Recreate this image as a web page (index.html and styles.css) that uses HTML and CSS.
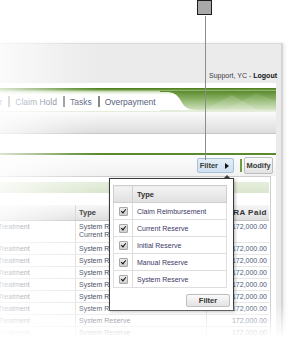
FILE: index.html
```html
<!doctype html>

<html lang="en">

<head>
  <meta charset="utf-8">
  <title>Claim Reserve Filter</title>
  <link rel="stylesheet" href="styles.css">
</head>

<body>
  <!-- callout pointing at the Filter button -->
  <div class="marker"></div>
  <div class="marker-line"></div>

  <div class="screen">
    <div class="userbar">Support, YC - <b>Logout</b></div>

    <div class="page">
      <div class="nav">
        <div class="nav-links">
          <span class="nav-item">Transfer</span>
          <span class="nav-sep"></span>
          <span class="nav-item">Claim Hold</span>
          <span class="nav-sep"></span>
          <span class="nav-item">Tasks</span>
          <span class="nav-sep"></span>
          <span class="nav-item">Overpayment</span>
        </div>
        <svg class="nav-swoosh" viewBox="0 0 116 23" preserveAspectRatio="none">
          <defs>
            <linearGradient id="swoosh" x1="0" y1="0" x2="0" y2="1">
              <stop offset="0" stop-color="#5a8a2c" />
              <stop offset="0.45" stop-color="#8db46a" />
              <stop offset="1" stop-color="#d2e2c0" />
            </linearGradient>
          </defs>
          <path d="M0 3 H116 V22 H36 C28 22 24 19 21 13 C17 6 13 4 6 4 H0 Z" fill="url(#swoosh)" />
          <path d="M44 22 L72 7 L98 22 Z" fill="#fff" opacity=".14" />
          <path d="M66 22 L96 5 L116 13 V22 Z" fill="#fff" opacity=".1" />
          <rect x="0" y="22" width="116" height="1" fill="#e4edd9" />
        </svg>
      </div>
      <div class="band"></div>
      <div class="gap"></div>

      <div class="toolbar">
        <button class="btn btn-filter">Filter <span class="btn-arrow"></span></button>
        <span class="tool-sep"></span>
        <button class="btn btn-modify">Modify</button>
      </div>

      <div class="grid">
        <div class="grid-title"></div>
        <table class="grid-table">
          <colgroup>
            <col class="col-treat">
            <col class="col-type">
            <col class="col-paid">
          </colgroup>
          <thead>
            <tr>
              <th></th>
              <th>Type</th>
              <th class="num paid-head">RA Paid</th>
            </tr>
          </thead>
          <tbody>
            <tr class="row-double">
              <td>Treatment</td>
              <td>System Reserve<br>Current Reserve</td>
              <td class="num">172,000.00</td>
            </tr>
            <tr><td>Treatment</td><td>System Reserve</td><td class="num">172,000.00</td></tr>
            <tr><td>Treatment</td><td>System Reserve</td><td class="num">172,000.00</td></tr>
            <tr><td>Treatment</td><td>System Reserve</td><td class="num">172,000.00</td></tr>
            <tr><td>Treatment</td><td>System Reserve</td><td class="num">172,000.00</td></tr>
            <tr><td>Treatment</td><td>System Reserve</td><td class="num">172,000.00</td></tr>
            <tr><td>Treatment</td><td>System Reserve</td><td class="num">172,000.00</td></tr>
            <tr><td>Treatment</td><td>System Reserve</td><td class="num">172,000.00</td></tr>
            <tr><td>Treatment</td><td>System Reserve</td><td class="num">172,000.00</td></tr>
          </tbody>
        </table>
      </div>
    </div>
  </div>

  <!-- filter dropdown -->
  <div class="popup">
    <table class="popup-table">
      <thead>
        <tr><th class="check-col"></th><th>Type</th></tr>
      </thead>
      <tbody>
        <tr><td class="check-col"><span class="check"></span></td><td>Claim Reimbursement</td></tr>
        <tr><td class="check-col"><span class="check"></span></td><td>Current Reserve</td></tr>
        <tr><td class="check-col"><span class="check"></span></td><td>Initial Reserve</td></tr>
        <tr><td class="check-col"><span class="check"></span></td><td>Manual Reserve</td></tr>
        <tr><td class="check-col"><span class="check"></span></td><td>System Reserve</td></tr>
      </tbody>
    </table>
    <div class="popup-foot">
      <button class="btn btn-apply">Filter</button>
    </div>
  </div>

  <div class="fade"></div>
</body>

</html>
```

FILE: styles.css
```css
body {
  margin: 0;
  padding: 0;
  width: 288px;
  height: 338px;
  overflow: hidden;
  position: relative;
  background: #fff;
  font-family: "Liberation Sans", Arial, sans-serif;
  color: #444;
}

.marker {
  position: absolute;
  top: 0;
  left: 197px;
  width: 13px;
  height: 13px;
  background: #a9a9a9;
  border: 1.5px solid #1c1c1c;
  z-index: 5;
}

.marker-line {
  position: absolute;
  top: 16px;
  left: 205px;
  width: 1px;
  height: 144px;
  background: #8c8c8c;
  z-index: 5;
}

.screen {
  margin-top: 43px;
  width: 281px;
  height: 295px;
  background: #ebebeb;
  border-top: 1px solid #d9d9d9;
  border-right: 2px solid #d4d4d4;
  box-shadow: 2px 0 3px rgba(0, 0, 0, .08);
}

.userbar {
  height: 39px;
  box-sizing: border-box;
  display: flex;
  align-items: flex-end;
  justify-content: flex-end;
  padding: 0 4px 2px 0;
  font-size: 7px;
  line-height: 10px;
  color: #3a3a4a;
}

.userbar b {
  margin-left: 2px;
  color: #111;
}

.page {
  margin-right: 5px;
  padding-top: 5px;
  height: 250px;
  background: #fff;
}

/* main navigation */

.nav {
  display: flex;
  height: 23px;
  background: linear-gradient(to bottom, #4b7b1f 0, #6c9a3e 2px, #b9d1a1 3px, #eef4e8 5px, #fff 7px);
}

.nav-links {
  display: flex;
  align-items: center;
  margin-left: -29px;
  padding-top: 4px;
  font-size: 8.5px;
  color: #55607c;
}

.nav-item {
  white-space: nowrap;
}

.nav-sep {
  width: 2px;
  height: 11px;
  margin: 0 5px 0 6px;
  background: #858585;
}

.nav-swoosh {
  flex: none;
  width: 116px;
  height: 23px;
  margin-left: auto;
}

.band {
  height: 21px;
  border-top: 1px solid #e4edd9;
  border-bottom: 1px solid #c6c6c6;
  background: linear-gradient(to bottom, #fbfbfb, #dddddd);
}

.gap {
  height: 19px;
}

/* toolbar */

.toolbar {
  display: flex;
  align-items: center;
  justify-content: flex-end;
  height: 21px;
  padding-right: 3px;
  border-top: 2px solid #5b8a2e;
  background: linear-gradient(to bottom, #fdfdfd, #f1f1f1);
}

.btn {
  margin: 0;
  padding: 0;
  font-family: "Liberation Sans", Arial, sans-serif;
  font-size: 7.5px;
  font-weight: bold;
  color: #3a3a3a;
  border: 1px solid #bdbdbd;
  border-radius: 2px;
  background: linear-gradient(to bottom, #fafafa, #e2e2e2);
}

.btn-filter {
  display: flex;
  align-items: center;
  justify-content: flex-end;
  width: 37px;
  height: 15px;
  padding-right: 4px;
  background: linear-gradient(to bottom, #e3eef8, #cfe0f0);
  border-color: #a9c2da;
}

.btn-arrow {
  width: 0;
  height: 0;
  margin-left: 7px;
  border-top: 3.5px solid transparent;
  border-bottom: 3.5px solid transparent;
  border-left: 4px solid #111;
}

.tool-sep {
  width: 2px;
  height: 13px;
  margin: 0 2px 0 6px;
  background: #6e9c40;
}

.btn-modify {
  width: 29px;
  height: 17px;
}

/* data grid */

.grid {
  margin: 0 5px 0 -8px;
  padding: 5px 1px 0;
  border: 1px solid #cdcdcd;
  border-bottom: none;
}

.grid-title {
  height: 11px;
  margin-bottom: 12px;
  background: linear-gradient(to bottom, #e6eedd, #dae6ce);
}

.grid-table {
  width: 100%;
  table-layout: fixed;
  border-collapse: collapse;
  font-size: 7px;
}

.col-treat {
  width: 81px;
}

.col-type {
  width: 131px;
}

.grid-table th {
  height: 15px;
  padding: 0 3px;
  text-align: left;
  font-size: 7.5px;
  color: #333;
  border-bottom: 1px solid #c4c4c4;
  border-left: 1px solid #d4d4d4;
  background: linear-gradient(to bottom, #f6f6f6, #dedede);
}

.grid-table td {
  height: 11px;
  padding: 0 3px;
  line-height: 11px;
  vertical-align: top;
  white-space: nowrap;
  overflow: hidden;
  color: #474d5c;
  border-bottom: 1px solid #e6e6e6;
  border-left: 1px solid #dcdcdc;
}

.grid-table th.num,
.grid-table td.num {
  text-align: right;
  padding-right: 2px;
}

.grid-table th.paid-head {
  padding-right: 2px;
  font-size: 8px;
  letter-spacing: .5px;
  white-space: nowrap;
}

.grid-table td.num {
  color: #4c5a7a;
}

.grid-table .row-double td {
  height: 16px;
  padding-top: 2px;
  padding-bottom: 3px;
  line-height: 8px;
}

/* filter popup */

.popup {
  position: absolute;
  top: 178px;
  left: 109px;
  width: 117px;
  padding: 6px 3px 3px 3px;
  background: #fff;
  border: 1px solid #3a3a3a;
  box-shadow: 1px 1px 3px rgba(0, 0, 0, .3);
  z-index: 3;
}

.popup::before {
  content: "";
  position: absolute;
  top: -4px;
  right: 3px;
  border-left: 3px solid transparent;
  border-right: 3px solid transparent;
  border-bottom: 3px solid #3a3a3a;
}

.popup-table {
  width: 114px;
  border-collapse: collapse;
  border: 1px solid #c9c9c9;
  font-size: 7px;
}

.popup-table th {
  height: 16px;
  padding: 0 4px;
  text-align: left;
  font-size: 7.5px;
  color: #2e2e2e;
  border: 1px solid #cfcfcf;
  background: linear-gradient(to bottom, #f4f4f4, #e0e0e0);
}

.popup-table td {
  height: 16px;
  padding: 0 4px;
  color: #3e3766;
  border: 1px solid #dedede;
}

.popup-table .check-col {
  width: 18px;
  padding: 0;
  text-align: center;
}

.check {
  display: inline-block;
  position: relative;
  width: 7px;
  height: 7px;
  vertical-align: middle;
  border: 1px solid #a8a8a8;
  border-radius: 1px;
  background: linear-gradient(to bottom, #ececec, #cfcfcf);
}

.check::after {
  content: "";
  position: absolute;
  left: 2px;
  top: 0;
  width: 2px;
  height: 4px;
  border-right: 1.5px solid #111;
  border-bottom: 1.5px solid #111;
  transform: rotate(40deg);
}

.popup-foot {
  display: flex;
  justify-content: flex-end;
  margin-top: 6px;
}

.btn-apply {
  width: 44px;
  height: 13px;
  color: #333;
}

.fade {
  position: absolute;
  top: 0;
  left: 0;
  right: 0;
  bottom: 0;
  pointer-events: none;
  z-index: 4;
  background:
    linear-gradient(to top, #fff 0, rgba(255, 255, 255, .6) 14px, rgba(255, 255, 255, 0) 34px),
    linear-gradient(to right, rgba(255, 255, 255, .78) 0, rgba(255, 255, 255, .5) 35px, rgba(255, 255, 255, .15) 75px, rgba(255, 255, 255, 0) 100px);
}
```
